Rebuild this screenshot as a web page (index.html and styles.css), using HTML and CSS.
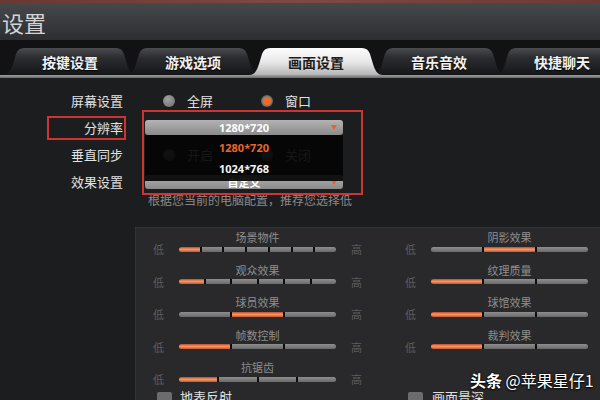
FILE: index.html
```html
<!DOCTYPE html>
<html lang="zh">
<head>
<meta charset="utf-8">
<title>设置</title>
<link rel="stylesheet" href="styles.css">
</head>
<body>
<div class="screen">
  <div class="topline"></div>
  <header class="header"><h1 class="title">设置</h1></header>

  <svg class="defs" width="0" height="0" aria-hidden="true">
    <defs>
      <linearGradient id="tabDark" x1="0" y1="0" x2="0" y2="1">
        <stop offset="0" stop-color="#4a4c50"/>
        <stop offset="0.35" stop-color="#2c2d31"/>
        <stop offset="1" stop-color="#151618"/>
      </linearGradient>
      <linearGradient id="tabLight" x1="0" y1="0" x2="0" y2="1">
        <stop offset="0" stop-color="#fdfdfd"/>
        <stop offset="0.55" stop-color="#e6e6e6"/>
        <stop offset="1" stop-color="#b4b4b4"/>
      </linearGradient>
    </defs>
  </svg>

  <nav class="tabbar">
    <div class="tab">
      <svg class="tab-shape" viewBox="0 0 134 27" preserveAspectRatio="none"><path d="M0,27 C6,27 8,22 10,16 L13,6 Q15,0 21,0 L113,0 Q119,0 121,6 L124,16 C126,22 128,27 134,27 Z" fill="url(#tabDark)"/></svg>
      <span>按键设置</span>
    </div>
    <div class="tab">
      <svg class="tab-shape" viewBox="0 0 134 27" preserveAspectRatio="none"><path d="M0,27 C6,27 8,22 10,16 L13,6 Q15,0 21,0 L113,0 Q119,0 121,6 L124,16 C126,22 128,27 134,27 Z" fill="url(#tabDark)"/></svg>
      <span>游戏选项</span>
    </div>
    <div class="tab active">
      <svg class="tab-shape" viewBox="0 0 134 27" preserveAspectRatio="none"><path d="M0,27 C6,27 8,22 10,16 L13,6 Q15,0 21,0 L113,0 Q119,0 121,6 L124,16 C126,22 128,27 134,27 Z" fill="url(#tabLight)"/></svg>
      <span>画面设置</span>
    </div>
    <div class="tab">
      <svg class="tab-shape" viewBox="0 0 134 27" preserveAspectRatio="none"><path d="M0,27 C6,27 8,22 10,16 L13,6 Q15,0 21,0 L113,0 Q119,0 121,6 L124,16 C126,22 128,27 134,27 Z" fill="url(#tabDark)"/></svg>
      <span>音乐音效</span>
    </div>
    <div class="tab">
      <svg class="tab-shape" viewBox="0 0 134 27" preserveAspectRatio="none"><path d="M0,27 C6,27 8,22 10,16 L13,6 Q15,0 21,0 L113,0 Q119,0 121,6 L124,16 C126,22 128,27 134,27 Z" fill="url(#tabDark)"/></svg>
      <span>快捷聊天</span>
    </div>
  </nav>
  <div class="tabline"></div>

  <main class="content">
    <div class="settings">
      <div class="row">
        <div class="label">屏幕设置</div>
        <div class="options">
          <span class="radio"><span class="dot"></span>全屏</span>
          <span class="radio"><span class="dot on"></span>窗口</span>
        </div>
      </div>
      <div class="row">
        <div class="label"><span class="boxed">分辨率</span></div>
        <div class="dropdown">
          <div class="select">1280*720<span class="arrow"></span></div>
          <div class="dd-list">
            <div class="dd-item current">1280*720</div>
            <div class="dd-item">1024*768</div>
          </div>
          <div class="highlight"></div>
        </div>
      </div>
      <div class="row">
        <div class="label">垂直同步</div>
        <div class="options">
          <span class="radio"><span class="dot"></span>开启</span>
          <span class="radio"><span class="dot"></span>关闭</span>
        </div>
      </div>
      <div class="row">
        <div class="label">效果设置</div>
        <div class="dropdown">
          <div class="select low-select">自定义<span class="arrow"></span></div>
        </div>
      </div>
    </div>
    <p class="hint">根据您当前的电脑配置，推荐您选择低</p>

    <section class="panel">
      <div class="panel-grid">
        <div class="col">
          <div class="item">
            <div class="item-label">场景物件</div>
            <span class="low">低</span>
            <div class="bar"><i class="seg on"></i><i class="seg"></i><i class="seg"></i><i class="seg"></i><i class="seg"></i><i class="seg"></i><i class="seg"></i></div>
            <span class="high">高</span>
          </div>
          <div class="item">
            <div class="item-label">观众效果</div>
            <span class="low">低</span>
            <div class="bar"><i class="seg on"></i><i class="seg"></i><i class="seg"></i><i class="seg"></i><i class="seg"></i><i class="seg"></i></div>
            <span class="high">高</span>
          </div>
          <div class="item">
            <div class="item-label">球员效果</div>
            <span class="low">低</span>
            <div class="bar"><i class="seg"></i><i class="seg on"></i><i class="seg"></i></div>
            <span class="high">高</span>
          </div>
          <div class="item">
            <div class="item-label">帧数控制</div>
            <span class="low">低</span>
            <div class="bar"><i class="seg on"></i><i class="seg"></i><i class="seg"></i></div>
            <span class="high">高</span>
          </div>
          <div class="item">
            <div class="item-label">抗锯齿</div>
            <span class="low">低</span>
            <div class="bar"><i class="seg on"></i><i class="seg"></i><i class="seg"></i><i class="seg"></i></div>
            <span class="high">高</span>
          </div>
        </div>
        <div class="col">
          <div class="item">
            <div class="item-label">阴影效果</div>
            <span class="low">低</span>
            <div class="bar"><i class="seg"></i><i class="seg on"></i><i class="seg"></i></div>
          </div>
          <div class="item">
            <div class="item-label">纹理质量</div>
            <span class="low">低</span>
            <div class="bar"><i class="seg on"></i><i class="seg"></i><i class="seg"></i></div>
          </div>
          <div class="item">
            <div class="item-label">球馆效果</div>
            <span class="low">低</span>
            <div class="bar"><i class="seg on"></i><i class="seg"></i><i class="seg"></i></div>
          </div>
          <div class="item">
            <div class="item-label">裁判效果</div>
            <span class="low">低</span>
            <div class="bar"><i class="seg on"></i><i class="seg"></i><i class="seg"></i></div>
          </div>
        </div>
      </div>
      <div class="checks">
        <span class="check"><span class="box"></span>地表反射</span>
        <span class="check right"><span class="box"></span>画面景深</span>
      </div>
    </section>
  </main>

  <div class="watermark"><b>头条</b> @苹果星仔1</div>
</div>
</body>
</html>
```

FILE: styles.css
```css
* { box-sizing: border-box; margin: 0; padding: 0; }
html, body { width: 600px; height: 400px; overflow: hidden; background: #1c1d1f; }
body { font-family: "Noto Sans CJK SC", "Noto Sans", sans-serif; color: #ddd; }

.screen { width: 600px; height: 400px; display: flex; flex-direction: column; position: relative; overflow: hidden; }

.topline { height: 3px; flex: none; background: linear-gradient(90deg, #6a3832, #7d4a40 50%, #6c3934); }
.header { height: 37px; flex: none; background: linear-gradient(#47484b, #2d2e31); display: flex; align-items: center; padding-left: 2px; }
.title { font-size: 22px; font-weight: normal; color: #d4d4d4; line-height: 1; }

.defs { position: absolute; width: 0; height: 0; }

.tabbar { height: 35px; flex: none; background: #121214; display: flex; align-items: flex-end; padding-left: 3px; }
.tab { position: relative; width: 134px; height: 27px; margin-right: -11px; flex: none; display: flex; align-items: center; justify-content: center; font-size: 14px; font-weight: bold; color: #f2f2f2; text-shadow: 0 1px 1px #000; }
.tab-shape { position: absolute; left: 0; top: 0; width: 100%; height: 100%; }
.tab span { position: relative; }
.tab.active { z-index: 2; color: #1c1c1c; text-shadow: none; }
.tabline { height: 3px; flex: none; background: linear-gradient(#a0a0a0, #6a6a6a); }

.content { flex: 1; display: flex; flex-direction: column; padding-top: 9px; min-height: 0; }

.settings { display: flex; flex-direction: column; }
.row { display: grid; grid-template-columns: 123px 198px; column-gap: 22px; height: 27px; align-items: center; }
.label { font-size: 13px; color: #e2e2e2; text-align: right; line-height: 20px; white-space: nowrap; }
.boxed { display: inline-block; width: 79px; height: 24px; margin-right: -3px; padding-right: 1px; border: 2px solid #cf3434; text-align: right; }

.options { display: flex; align-items: center; padding-left: 18px; white-space: nowrap; }
.radio { display: inline-flex; flex: none; align-items: center; gap: 12px; font-size: 13px; line-height: 18px; color: #e2e2e2; margin-right: 48px; }
.dot { width: 12px; height: 12px; flex: none; border-radius: 50%; background: radial-gradient(circle at 40% 35%, #a2a2a2, #6a6a6a); }
.dot.on { background: radial-gradient(circle, #f46a22 0 3.5px, #7a7a7a 4.5px, #626262 6px); }

.dropdown { position: relative; width: 198px; height: 15px; }
.select { position: relative; height: 15px; border-radius: 3px; background: linear-gradient(#b4b4b4, #8a8a8a); color: #fff; font-family: "Noto Sans", "Noto Sans CJK SC", sans-serif; font-weight: bold; font-size: 11px; line-height: 15px; text-align: center; white-space: nowrap; }
.low-select { margin-top: 1px; height: 14px; line-height: 14px; font-family: "Noto Sans CJK SC", sans-serif; }
.arrow { position: absolute; right: 6px; top: 5px; width: 0; height: 0; border-left: 3.5px solid transparent; border-right: 3.5px solid transparent; border-top: 5px solid #e8632a; }
.dd-list { position: absolute; left: 0; right: 0; top: 15px; height: 46px; padding-top: 2px; background: rgba(4, 4, 4, 0.92); z-index: 5; }
.dd-item { height: 21px; line-height: 21px; text-align: center; font-family: "Noto Sans", sans-serif; font-weight: bold; font-size: 11px; color: #f4f4f4; }
.dd-item.current { color: #e8652d; }
.highlight { position: absolute; left: -3px; top: -10px; width: 221px; height: 85px; border: 2px solid #cf3434; z-index: 6; }

.hint { margin: -2px 0 0 148px; font-size: 12px; line-height: 14px; color: #8a8a8a; white-space: nowrap; }

.panel { flex: 1; margin: 20px 0 0 135px; background: #29292b; border-top: 1px solid #333335; border-left: 1px solid #333335; padding: 3px 0 0 17px; }
.panel-grid { display: grid; grid-template-columns: 209px 183px; column-gap: 43px; }
.col { display: flex; flex-direction: column; }
.item { display: grid; grid-template-columns: 11px 157px 11px; column-gap: 15px; grid-template-rows: 12px 12px; align-items: center; margin-bottom: 8.5px; }
.item:last-child { margin-bottom: 0; }
.item-label { grid-column: 2; grid-row: 1; text-align: center; font-size: 11px; line-height: 12px; color: #8e8e8e; white-space: nowrap; }
.low, .high { grid-row: 2; font-size: 11px; line-height: 12px; color: #5c5c5c; }
.low { grid-column: 1; }
.high { grid-column: 3; }
.bar { grid-column: 2; grid-row: 2; height: 5px; display: flex; border-radius: 3px; overflow: hidden; }
.seg { flex: 1; background: linear-gradient(#8e8e8e, #6a6a6a); }
.seg + .seg { border-left: 2px solid #0c0c0c; }
.seg.on { background: linear-gradient(#b44c24, #f59a6c 45%, #cf5628); }

.checks { display: grid; grid-template-columns: 252px 1fr; margin-top: 5px; }
.check { display: flex; align-items: center; gap: 8px; padding-left: 4px; font-size: 13px; color: #e0e0e0; line-height: 14px; white-space: nowrap; }
.check.right { padding-left: 3px; gap: 9px; }
.box { width: 15px; height: 11px; flex: none; border-radius: 2px; background: #6c6c6c; }

.watermark { position: absolute; left: 470px; top: 370px; font-size: 16px; line-height: 20px; color: #fff; text-shadow: 0 0 2px #000, 0 1px 2px #000; white-space: nowrap; }
.watermark b { font-weight: bold; }
```
